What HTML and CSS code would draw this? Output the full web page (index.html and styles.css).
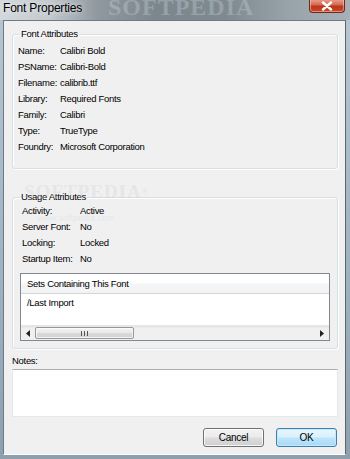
FILE: index.html
```html
<!DOCTYPE html>
<html>
<head>
<meta charset="utf-8">
<link rel="stylesheet" href="styles.css">
</head>
<body>
<div class="window">
  <div class="titlebar">
    <span class="title">Font Properties</span>
    <span class="wm-title">SOFTPEDIA</span>
    <div class="close">
      <svg width="14" height="10" viewBox="0 0 14 10"><path d="M3 1.5 L11 8.5 M11 1.5 L3 8.5" stroke="#fff" stroke-width="2.4" stroke-linecap="round"/></svg>
    </div>
  </div>
  <div class="client">
    <fieldset class="group g1">
      <legend>Font Attributes</legend>
      <div class="row"><span class="k k1">Name:</span><span class="v">Calibri Bold</span></div>
      <div class="row"><span class="k k1">PSName:</span><span class="v">Calibri-Bold</span></div>
      <div class="row"><span class="k k1">Filename:</span><span class="v">calibrib.ttf</span></div>
      <div class="row"><span class="k k1">Library:</span><span class="v">Required Fonts</span></div>
      <div class="row"><span class="k k1">Family:</span><span class="v">Calibri</span></div>
      <div class="row"><span class="k k1">Type:</span><span class="v">TrueType</span></div>
      <div class="row"><span class="k k1">Foundry:</span><span class="v">Microsoft Corporation</span></div>
    </fieldset>
    <fieldset class="group g2">
      <legend>Usage Attributes</legend>
      <div class="row"><span class="k k2">Activity:</span><span class="v">Active</span></div>
      <div class="row"><span class="k k2">Server Font:</span><span class="v">No</span></div>
      <div class="row"><span class="k k2">Locking:</span><span class="v">Locked</span></div>
      <div class="row"><span class="k k2">Startup Item:</span><span class="v">No</span></div>
      <div class="list">
        <div class="lhead">Sets Containing This Font</div>
        <div class="lbody"><div class="item">/Last Import</div></div>
        <div class="hscroll">
          <svg class="arr" width="4" height="7" viewBox="0 0 4 7"><path d="M4 0 L0 3.5 L4 7 Z" fill="#222"/></svg>
          <div class="track">
            <div class="thumb"><span class="grip"></span></div>
          </div>
          <svg class="arr" width="4" height="7" viewBox="0 0 4 7"><path d="M0 0 L4 3.5 L0 7 Z" fill="#222"/></svg>
        </div>
      </div>
    </fieldset>
    <div class="notes-label">Notes:</div>
    <div class="notes"></div>
    <div class="buttons">
      <button class="btn">Cancel</button>
      <button class="btn default">OK</button>
    </div>
    <div class="wm-body">SOFTPEDIA<sup>®</sup><span class="wm-url">www.softpedia.com</span></div>
  </div>
</div>
</body>
</html>
```
FILE: styles.css
```css
html, body {
  margin: 0;
  padding: 0;
}
body {
  width: 350px;
  height: 459px;
  overflow: hidden;
  background: #3e4850;
  font-family: "Liberation Sans", Arial, sans-serif;
  font-size: 9.5px;
  letter-spacing: -0.3px;
  color: #000;
}
.window {
  width: 350px;
  height: 459px;
  box-sizing: border-box;
  display: flex;
  flex-direction: column;
  background: linear-gradient(180deg, #b7c6d2 0%, #9fb2c2 60%, #8ea0ae 100%);
}
.titlebar {
  position: relative;
  height: 20px;
  flex: none;
  background: linear-gradient(90deg, #d3d8dc 0%, #c3c9cd 14%, #8f989e 28%, #7c868d 45%, #7e8990 65%, #98a2a9 82%, #a7b0b6 100%);
  overflow: hidden;
}
.title {
  position: absolute;
  left: 3px;
  top: 2px;
  font-size: 12px;
  letter-spacing: -0.2px;
  line-height: 13px;
  color: #000;
  text-shadow: 0 0 6px rgba(255,255,255,0.9);
}
.wm-title {
  position: absolute;
  left: 108px;
  top: -6px;
  font-family: "Liberation Serif", serif;
  font-weight: bold;
  font-size: 24px;
  line-height: 26px;
  letter-spacing: 1px;
  color: rgba(200, 212, 222, 0.35);
}
.close {
  position: absolute;
  left: 309px;
  top: -1px;
  width: 36px;
  height: 14px;
  box-sizing: border-box;
  border: 1px solid #6b2a20;
  border-top: none;
  border-radius: 0 0 4px 4px;
  background: linear-gradient(180deg, #e9a593 0%, #d36a52 45%, #be3418 55%, #c64a2c 100%);
  display: flex;
  align-items: center;
  justify-content: center;
  box-shadow: inset 0 0 0 1px rgba(255,220,200,0.5);
}
.close svg {
  display: block;
}
.client {
  position: relative;
  flex: none;
  margin: 0 4px 0 3px;
  height: 435px;
  border-left: 1px solid #6f7a82;
  border-top: 1px solid #6f7a82;
  border-right: 1px solid #5d666c;
  border-bottom: 1px solid #ffffff;
  box-sizing: border-box;
  background: #f0f0f0;
  display: flex;
  flex-direction: column;
}
.group {
  margin: 0 7px 0 8px;
  padding: 0 8px 0 7px;
  border: 1px solid #d5dfe5;
  border-radius: 3px;
  box-shadow: inset 1px 1px 0 #fff, 1px 1px 0 #fff;
  min-width: 0;
}
.group legend {
  padding: 0 1px;
  margin-left: 0;
  line-height: 12px;
}
.g1 {
  margin-top: 7px;
  padding-top: 3px;
  padding-bottom: 13px;
}
.g2 {
  margin-top: 22px;
  padding-top: 0;
  padding-bottom: 7px;
}
.row {
  display: flex;
  line-height: 16px;
  height: 16px;
  white-space: nowrap;
}
.k1 {
  width: 42px;
  margin-left: -2px;
}
.k2 {
  width: 58px;
  margin-left: 2px;
}
.list {
  margin-top: 6px;
  width: 310px;
  height: 68px;
  box-sizing: border-box;
  border: 1px solid #828790;
  background: #fff;
  display: flex;
  flex-direction: column;
}
.lhead {
  height: 19px;
  line-height: 19px;
  padding-left: 6px;
  background: linear-gradient(180deg, #ffffff 0%, #ffffff 45%, #f4f5f7 55%, #f2f3f5 100%);
  border-bottom: 1px solid #d5d5d5;
  flex: none;
  white-space: nowrap;
}
.lbody {
  flex: 1;
  padding-top: 1px;
}
.item {
  padding-left: 6px;
  line-height: 16px;
}
.hscroll {
  flex: none;
  height: 15px;
  display: flex;
  align-items: center;
  background: linear-gradient(180deg, #e3e3e3 0%, #f0f0f0 20%, #f0f0f0 100%);
  border-top: 1px solid #e6e6e6;
  padding: 0 5px;
  box-sizing: border-box;
}
.arr {
  flex: none;
  display: block;
}
.track {
  flex: 1;
  height: 100%;
  display: flex;
  align-items: center;
  padding: 0 5px;
}
.thumb {
  width: 99px;
  height: 12px;
  box-sizing: border-box;
  border: 1px solid #979797;
  border-radius: 2px;
  background: linear-gradient(180deg, #f3f3f3 0%, #e9e9e9 45%, #d9d9d9 55%, #d2d2d2 100%);
  box-shadow: inset 0 0 0 1px rgba(255,255,255,0.7);
  display: flex;
  align-items: center;
  justify-content: center;
}
.grip {
  width: 7px;
  height: 5px;
  background: repeating-linear-gradient(90deg, #555 0, #555 1px, transparent 1px, transparent 3px);
}
.notes-label {
  margin: 6px 0 0 8px;
  line-height: 12px;
  height: 12px;
}
.notes {
  margin: 2px 7px 0 8px;
  height: 48px;
  box-sizing: border-box;
  background: #fff;
  border: 1px solid #e3e9ef;
  border-top-color: #abadb3;
  border-radius: 1px;
}
.buttons {
  margin: 11px 8px 0 0;
  display: flex;
  justify-content: flex-end;
  gap: 12px;
}
.btn {
  width: 61px;
  height: 19px;
  margin: 0;
  padding: 0;
  font-family: inherit;
  font-size: 10px;
  letter-spacing: -0.3px;
  line-height: 17px;
  color: #000;
  border: 1px solid #707070;
  border-radius: 3px;
  background: linear-gradient(180deg, #f2f2f2 0%, #ebebeb 48%, #dddddd 52%, #cfcfcf 100%);
  box-shadow: inset 0 0 0 1px rgba(255,255,255,0.8);
}
.btn.default {
  border-color: #3c7fb1;
  background: linear-gradient(180deg, #eaf6fd 0%, #d9f0fc 48%, #bee6fd 52%, #a7d9f5 100%);
  box-shadow: inset 0 0 0 1px #c3eafb;
}
.wm-body {
  position: absolute;
  left: 20px;
  top: 161px;
  font-family: "Liberation Serif", serif;
  font-weight: bold;
  font-size: 19px;
  letter-spacing: 1px;
  color: rgba(200, 205, 210, 0.3);
  pointer-events: none;
  line-height: 20px;
}
.wm-body sup {
  font-size: 8px;
  vertical-align: top;
}
.wm-url {
  display: block;
  font-family: "Liberation Sans", sans-serif;
  font-weight: normal;
  font-size: 9px;
  letter-spacing: 0;
  margin-left: 13px;
  margin-top: 11px;
  line-height: 10px;
}
```
